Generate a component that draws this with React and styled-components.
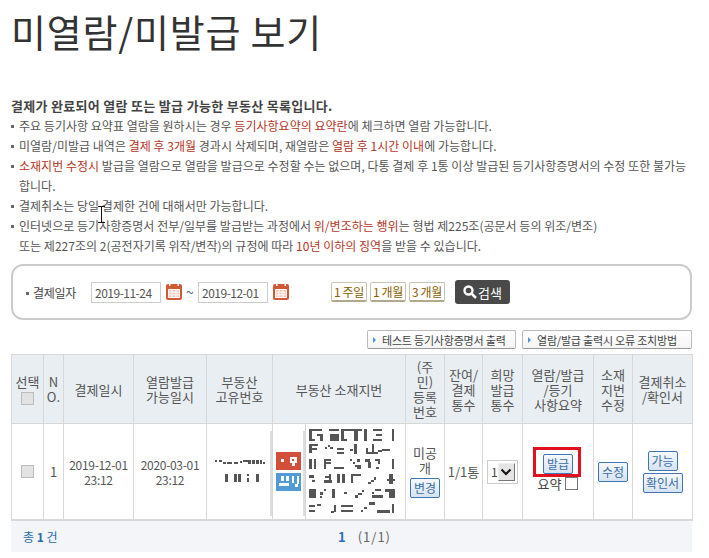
import React from "react";
import styled, { createGlobalStyle } from "styled-components";

const GlobalStyle = createGlobalStyle`
  html, body {
    margin: 0;
    padding: 0;
    background: #fff;
  }
  body {
    font-family: "Noto Sans CJK KR", "Liberation Sans", sans-serif;
    font-size: 12px;
    color: #555;
  }
`;

const columns = [32, 20, 70, 73, 66, 33, 100, 39, 38, 40, 71, 39, 60];

const addressBlocks = [
  [117,15,8,36],[125,15,30,6],[125,45,10,6],[140,30,17,6],[150,36,7,15],[175,15,30,6],[178,30,27,21],[212,15,8,36],[220,15,25,6],[220,45,10,6],[240,15,35,6],[252,21,12,30],[282,15,8,36],[310,15,25,6],[318,30,17,6],[310,45,25,6],[365,15,8,36],
  [117,60,8,28],[125,60,18,6],[125,72,14,6],[165,70,6,5],[172,62,8,6],[180,70,8,5],[200,72,20,6],[200,84,20,6],[238,76,10,6],[252,60,8,30],[287,72,8,18],[295,84,30,6],[305,60,8,24],[325,78,10,6],[337,75,22,6],
  [117,105,8,30],[130,105,8,30],[160,105,8,30],[168,115,14,6],[168,105,14,6],[190,128,30,7],[240,105,6,6],[248,115,6,6],[254,122,18,8],[262,105,8,8],[262,128,10,6],[285,105,16,8],[295,113,8,18],[315,105,15,6],[325,111,6,10],[318,128,8,6],[365,105,8,30],
  [117,155,15,7],[125,168,8,6],[165,158,18,6],[175,150,8,28],[160,170,25,8],[200,150,8,28],[215,150,8,28],[242,150,30,7],[242,157,8,21],[303,170,8,6],[295,176,8,4],[311,160,6,8],[350,165,25,8],[358,150,10,30],
  [117,195,20,28],[150,205,8,8],[160,195,8,8],[150,218,6,6],[185,195,8,28],[222,205,8,6],[255,215,8,8],[265,207,10,6],[275,200,6,6],[305,205,8,6],[315,197,18,6],[305,215,35,8],[345,197,30,8],[358,205,17,18],
  [117,245,18,6],[117,258,18,8],[140,240,12,6],[182,262,8,6],[190,245,6,20],[212,243,38,6],[212,258,38,8],[272,258,8,6],[282,250,10,6],[297,235,18,8],[320,260,40,8],[365,240,8,28],
];

const numberBlocks = [
  [25,34,8,6],[38,34,8,6],[50,38,8,6],[62,40,14,4],[82,40,14,4],[100,37,8,6],[112,34,22,6],[125,39,10,7],[138,34,8,10],[150,34,8,10],[162,34,6,10],[172,38,5,6],
  [57,75,9,25],[82,75,9,25],[95,75,9,25],[122,75,8,6],[122,88,8,12],[150,75,8,25],
];

const Page = styled.div`
  width: 709px;
  height: 558px;
  overflow: hidden;
  padding: 0 17px 0 11px;
  box-sizing: border-box;
  position: relative;
`;

const Title = styled.h1`
  margin: 0;
  padding-top: 8px;
  height: 96px;
  box-sizing: border-box;
  font-size: 38px;
  line-height: 46px;
  font-weight: 400;
  color: #333;
  letter-spacing: 0.8px;
`;

const Notice = styled.div`
  line-height: 20px;
  letter-spacing: 0.02px;
  white-space: nowrap;
`;

const Lead = styled.strong`
  display: block;
  color: #444;
  font-size: 13px;
  font-weight: 700;
  letter-spacing: 0.3px;
`;

const NoticeItem = styled.div`
  padding-left: 8px;
  position: relative;

  &::before {
    content: "";
    position: absolute;
    left: 0;
    top: 9px;
    width: 3px;
    height: 3px;
    background: #666;
  }
`;

const Red = styled.span`
  color: #b5361f;
`;

const SearchBox = styled.div`
  margin-top: 8px;
  height: 56px;
  box-sizing: border-box;
  border: 2px solid #ccc;
  border-radius: 12px;
  display: flex;
  align-items: center;
  padding: 0 0 0 13px;
`;

const SearchLabel = styled.span`
  padding-left: 7px;
  position: relative;
  width: 65px;
  box-sizing: border-box;
  color: #444;
  letter-spacing: -0.3px;
  white-space: nowrap;

  &::before {
    content: "";
    position: absolute;
    left: 0;
    top: 8px;
    width: 3px;
    height: 3px;
    background: #666;
  }
`;

const DateInput = styled.div`
  width: 70px;
  height: 21px;
  box-sizing: border-box;
  border: 1px solid #ccc;
  font-size: 12px;
  line-height: 19px;
  padding-left: 3px;
  color: #555;
  letter-spacing: -0.5px;
`;

const CalendarSvg = styled.svg`
  display: block;
  width: 16px;
  height: 16px;
  margin-left: 5px;
`;

const Tilde = styled.span`
  width: 16px;
  text-align: center;
  font-size: 14px;
  color: #666;
`;

const RangeGroup = styled.div`
  display: flex;
  gap: 3px;
  margin-left: 42px;
`;

const RangeButton = styled.div`
  height: 20px;
  width: ${(p) => p.$w}px;
  box-sizing: border-box;
  border: 1px solid #c9c3b4;
  border-bottom: 2px solid #b0a990;
  border-radius: 2px;
  text-align: center;
  font-size: 12px;
  line-height: 18px;
  color: #8a6000;
  letter-spacing: -0.3px;
  white-space: nowrap;
`;

const SearchButton = styled.div`
  margin-left: 10px;
  width: 55px;
  height: 24px;
  background: #494949;
  border-radius: 3px;
  color: #fff;
  display: flex;
  align-items: center;
  justify-content: center;
  gap: 1px;
  font-size: 13px;
`;

const ActionRow = styled.div`
  display: flex;
  justify-content: flex-end;
  gap: 6px;
  margin-top: 10px;
  margin-bottom: 5px;
`;

const ActionButton = styled.div`
  height: 19px;
  box-sizing: border-box;
  width: ${(p) => p.$w}px;
  border: 1px solid #bbb;
  border-bottom-color: #999;
  border-radius: 2px;
  background: linear-gradient(#fff, #f4f4f4);
  display: flex;
  align-items: center;
  gap: 6px;
  padding-left: 5px;
  font-size: 11px;
  color: #444;
  white-space: nowrap;
  letter-spacing: -0.2px;

  &::before {
    content: "";
    border-left: 3px solid #4d97d6;
    border-top: 3px solid transparent;
    border-bottom: 3px solid transparent;
  }
`;

const Table = styled.table`
  width: 681px;
  table-layout: fixed;
  border-collapse: collapse;
  font-size: 13px;
  line-height: 15px;
  color: #555;
`;

const HeadCell = styled.th`
  height: 68px;
  padding: 0;
  background: #e9eef3;
  border: 1px solid #d7d7d7;
  font-weight: 400;
  text-align: center;
  vertical-align: middle;
  white-space: nowrap;
`;

const Cell = styled.td`
  height: 95px;
  padding: 0;
  border: 1px solid #d7d7d7;
  border-bottom: 2px solid #d7d7dc;
  text-align: center;
  vertical-align: middle;
  white-space: nowrap;
  position: relative;
`;

const DateText = styled.span`
  font-size: 12px;
  letter-spacing: -0.3px;
`;

const SideBar = styled.i`
  position: absolute;
  right: 0;
  top: 7px;
  bottom: 3px;
  width: 2px;
  background: #dcdce2;
`;

const Check = styled.span`
  display: block;
  width: 13px;
  height: 13px;
  margin: ${(p) => p.$m || "0 auto"};
  box-sizing: border-box;
  background: #e2e2e2;
  border: 1px solid #bbb;
`;

const Badge = styled.svg`
  display: block;
  width: 25px;
  height: 18px;
  margin-left: 3px;
`;

const BadgeStack = styled.div`
  display: flex;
  flex-direction: column;
  gap: 3px;
`;

const Mosaic = styled.svg`
  display: block;
  margin: ${(p) => p.$m || "0 auto"};
`;

const BlueButton = styled.span`
  display: block;
  width: ${(p) => p.$w || 30}px;
  height: 20px;
  margin: ${(p) => p.$m || "0 auto"};
  box-sizing: border-box;
  border: 1px solid #3f74b5;
  border-radius: 2px;
  background: linear-gradient(#f6f9fc, #d7e3f1);
  color: #3a6ea8;
  font-size: 12px;
  line-height: 18px;
  white-space: nowrap;
`;

const CountSelect = styled.div`
  width: 31px;
  height: 24px;
  margin: 0 auto;
  box-sizing: border-box;
  border: 1px solid #ccc;
  padding: 2px 2px 2px 3px;
  display: flex;
  align-items: center;
  justify-content: space-between;
  color: #444;
  font-size: 12px;
`;

const SelectArrow = styled.span`
  width: 18px;
  height: 18px;
  box-sizing: border-box;
  border: 1px solid;
  border-color: #eee #777 #777 #eee;
  background: #e4e4e4;
  display: flex;
  align-items: center;
  justify-content: center;
`;

const SummaryRow = styled.div`
  display: flex;
  justify-content: center;
  align-items: center;
  gap: 4px;
  margin-top: 3px;
  color: #444;
  line-height: 13px;
`;

const SummaryBox = styled.span`
  width: 13px;
  height: 13px;
  box-sizing: border-box;
  border: 1px solid #777;
  background: #fff;
`;

const Highlight = styled.div`
  position: absolute;
  left: 10px;
  top: 23px;
  width: 48px;
  height: 30px;
  box-sizing: border-box;
  border: 3px solid #e3101f;
`;

const IBeam = styled.svg`
  position: absolute;
  left: 98px;
  top: 206px;
`;

const Footer = styled.div`
  height: 31px;
  background: #f4f5f8;
  display: flex;
  align-items: center;
  color: #666;
  font-size: 13px;
`;

const Total = styled.div`
  width: 327px;
  padding-left: 12px;
  box-sizing: border-box;
  color: #2a6ca8;
  font-size: 12px;
`;

const Paging = styled.div`
  letter-spacing: 1px;

  b {
    color: #2a6fc0;
    margin-right: 11px;
  }
`;

function CalendarIcon() {
  return (
    <CalendarSvg viewBox="0 0 16 16">
      <rect x="0" y="0" width="16" height="16" rx="2" fill="#cf5a33" />
      <rect x="3" y="0" width="1.5" height="2" fill="#fff" />
      <rect x="11.5" y="0" width="1.5" height="2" fill="#fff" />
      <path d="M2.5 5.5h11v8h-11z" fill="#f3c9b8" stroke="#fff" />
      <path d="M6 5.5v8M10 5.5v8M2.5 8.2h11M2.5 10.9h11" stroke="#fff" strokeWidth="0.9" />
    </CalendarSvg>
  );
}

function SearchIcon() {
  return (
    <svg width="14" height="14" viewBox="0 0 14 14">
      <circle cx="5.5" cy="5.5" r="4" fill="none" stroke="#fff" strokeWidth="2.4" />
      <path d="M8.6 8.6 13 13" stroke="#fff" strokeWidth="2.6" />
    </svg>
  );
}

function Blocks({ list, viewBox, width, height, margin }) {
  return (
    <Mosaic $m={margin} width={width} height={height} viewBox={viewBox} shapeRendering="crispEdges">
      {list.map(([x, y, w, h], i) => (
        <rect key={i} x={x} y={y} width={w} height={h} fill="#555" />
      ))}
    </Mosaic>
  );
}

export default function App() {
  return (
    <Page>
      <GlobalStyle />
      <Title>미열람/미발급 보기</Title>
      <Notice>
        <Lead>결제가 완료되어 열람 또는 발급 가능한 부동산 목록입니다.</Lead>
        <NoticeItem>
          주요 등기사항 요약표 열람을 원하시는 경우 <Red>등기사항요약의 요약란</Red>에 체크하면 열람 가능합니다.
        </NoticeItem>
        <NoticeItem>
          미열람/미발급 내역은 <Red>결제 후 3개월</Red> 경과시 삭제되며, 재열람은 <Red>열람 후 1시간 이내</Red>에 가능합니다.
        </NoticeItem>
        <NoticeItem>
          <Red>소재지번 수정시</Red> 발급을 열람으로 열람을 발급으로 수정할 수는 없으며, 다통 결제 후 1통 이상 발급된 등기사항증명서의 수정 또한 불가능
          <br />
          합니다.
        </NoticeItem>
        <NoticeItem>결제취소는 당일 결제한 건에 대해서만 가능합니다.</NoticeItem>
        <NoticeItem>
          인터넷으로 등기사항증명서 전부/일부를 발급받는 과정에서 <Red>위/변조하는 행위</Red>는 형법 제225조(공문서 등의 위조/변조)
          <br />
          또는 제227조의 2(공전자기록 위작/변작)의 규정에 따라 <Red>10년 이하의 징역</Red>을 받을 수 있습니다.
        </NoticeItem>
      </Notice>
      <SearchBox>
        <SearchLabel>결제일자</SearchLabel>
        <DateInput>2019-11-24</DateInput>
        <CalendarIcon />
        <Tilde>~</Tilde>
        <DateInput>2019-12-01</DateInput>
        <CalendarIcon />
        <RangeGroup>
          <RangeButton $w={36}>1 주일</RangeButton>
          <RangeButton $w={36}>1 개월</RangeButton>
          <RangeButton $w={36}>3 개월</RangeButton>
        </RangeGroup>
        <SearchButton>
          <SearchIcon />
          검색
        </SearchButton>
      </SearchBox>
      <ActionRow>
        <ActionButton $w={149}>테스트 등기사항증명서 출력</ActionButton>
        <ActionButton $w={170}>열람/발급 출력시 오류 조치방법</ActionButton>
      </ActionRow>
      <Table>
        <colgroup>
          {columns.map((w, i) => (
            <col key={i} style={{ width: w }} />
          ))}
        </colgroup>
        <thead>
          <tr>
            <HeadCell>
              선택
              <Check $m="3px auto 0" />
            </HeadCell>
            <HeadCell>
              N
              <br />
              O.
            </HeadCell>
            <HeadCell>결제일시</HeadCell>
            <HeadCell>
              열람발급
              <br />
              가능일시
            </HeadCell>
            <HeadCell>
              부동산
              <br />
              고유번호
            </HeadCell>
            <HeadCell colSpan={2}>부동산 소재지번</HeadCell>
            <HeadCell>
              (주
              <br />
              민)
              <br />
              등록
              <br />
              번호
            </HeadCell>
            <HeadCell>
              잔여/
              <br />
              결제
              <br />
              통수
            </HeadCell>
            <HeadCell>
              희망
              <br />
              발급
              <br />
              통수
            </HeadCell>
            <HeadCell>
              열람/발급
              <br />
              /등기
              <br />
              사항요약
            </HeadCell>
            <HeadCell>
              소재
              <br />
              지번
              <br />
              수정
            </HeadCell>
            <HeadCell>
              결제취소
              <br />
              /확인서
            </HeadCell>
          </tr>
        </thead>
        <tbody>
          <tr>
            <Cell>
              <Check />
            </Cell>
            <Cell>1</Cell>
            <Cell>
              <DateText>
                2019-12-01
                <br />
                23:12
              </DateText>
            </Cell>
            <Cell>
              <DateText>
                2020-03-01
                <br />
                23:12
              </DateText>
            </Cell>
            <Cell>
              <Blocks list={numberBlocks} viewBox="20 30 160 75" width={53} height={25} />
              <SideBar />
            </Cell>
            <Cell>
              <BadgeStack>
                <Badge viewBox="0 0 25 18" shapeRendering="crispEdges">
                  <rect width="25" height="18" fill="#d2503a" />
                  <rect x="5" y="7" width="3" height="3" fill="#fff" />
                  <rect x="14" y="5" width="7" height="6" fill="#fff" />
                  <rect x="16" y="11" width="3" height="3" fill="#fff" />
                  <rect x="16" y="7" width="2" height="2" fill="#d2503a" />
                </Badge>
                <Badge viewBox="0 0 25 18" shapeRendering="crispEdges">
                  <rect width="25" height="18" fill="#549bd6" />
                  <rect x="5" y="3" width="3" height="5" fill="#fff" />
                  <rect x="3" y="10" width="10" height="3" fill="#fff" />
                  <rect x="10" y="3" width="3" height="5" fill="#fff" />
                  <rect x="16" y="3" width="2" height="7" fill="#fff" />
                  <rect x="21" y="3" width="2" height="8" fill="#fff" />
                  <rect x="19" y="11" width="3" height="3" fill="#fff" />
                </Badge>
              </BadgeStack>
              <SideBar />
            </Cell>
            <Cell>
              <Blocks list={addressBlocks} viewBox="117 12 260 262" width={87} height={87} margin="0 0 0 3px" />
            </Cell>
            <Cell>
              미공
              <br />
              개
              <BlueButton $m="3px auto 0">변경</BlueButton>
            </Cell>
            <Cell>1/1통</Cell>
            <Cell>
              <CountSelect>
                1
                <SelectArrow>
                  <svg width="12" height="8" viewBox="0 0 12 8">
                    <path d="M1.5 1.5 6 6l4.5-4.5" fill="none" stroke="#111" strokeWidth="2" />
                  </svg>
                </SelectArrow>
              </CountSelect>
            </Cell>
            <Cell>
              <BlueButton>발급</BlueButton>
              <SummaryRow>
                요약
                <SummaryBox />
              </SummaryRow>
              <Highlight />
            </Cell>
            <Cell>
              <BlueButton>수정</BlueButton>
            </Cell>
            <Cell>
              <BlueButton>가능</BlueButton>
              <BlueButton $w={40} $m="2px auto 0">
                확인서
              </BlueButton>
            </Cell>
          </tr>
        </tbody>
      </Table>
      <Footer>
        <Total>
          총 <b>1</b> 건
        </Total>
        <Paging>
          <b>1</b>(1/1)
        </Paging>
      </Footer>
      <IBeam width="7" height="17" viewBox="0 0 7 17">
        <path d="M0 .5h7M0 16.5h7M3.5 0v17" stroke="#111" strokeWidth="1" />
      </IBeam>
    </Page>
  );
}
